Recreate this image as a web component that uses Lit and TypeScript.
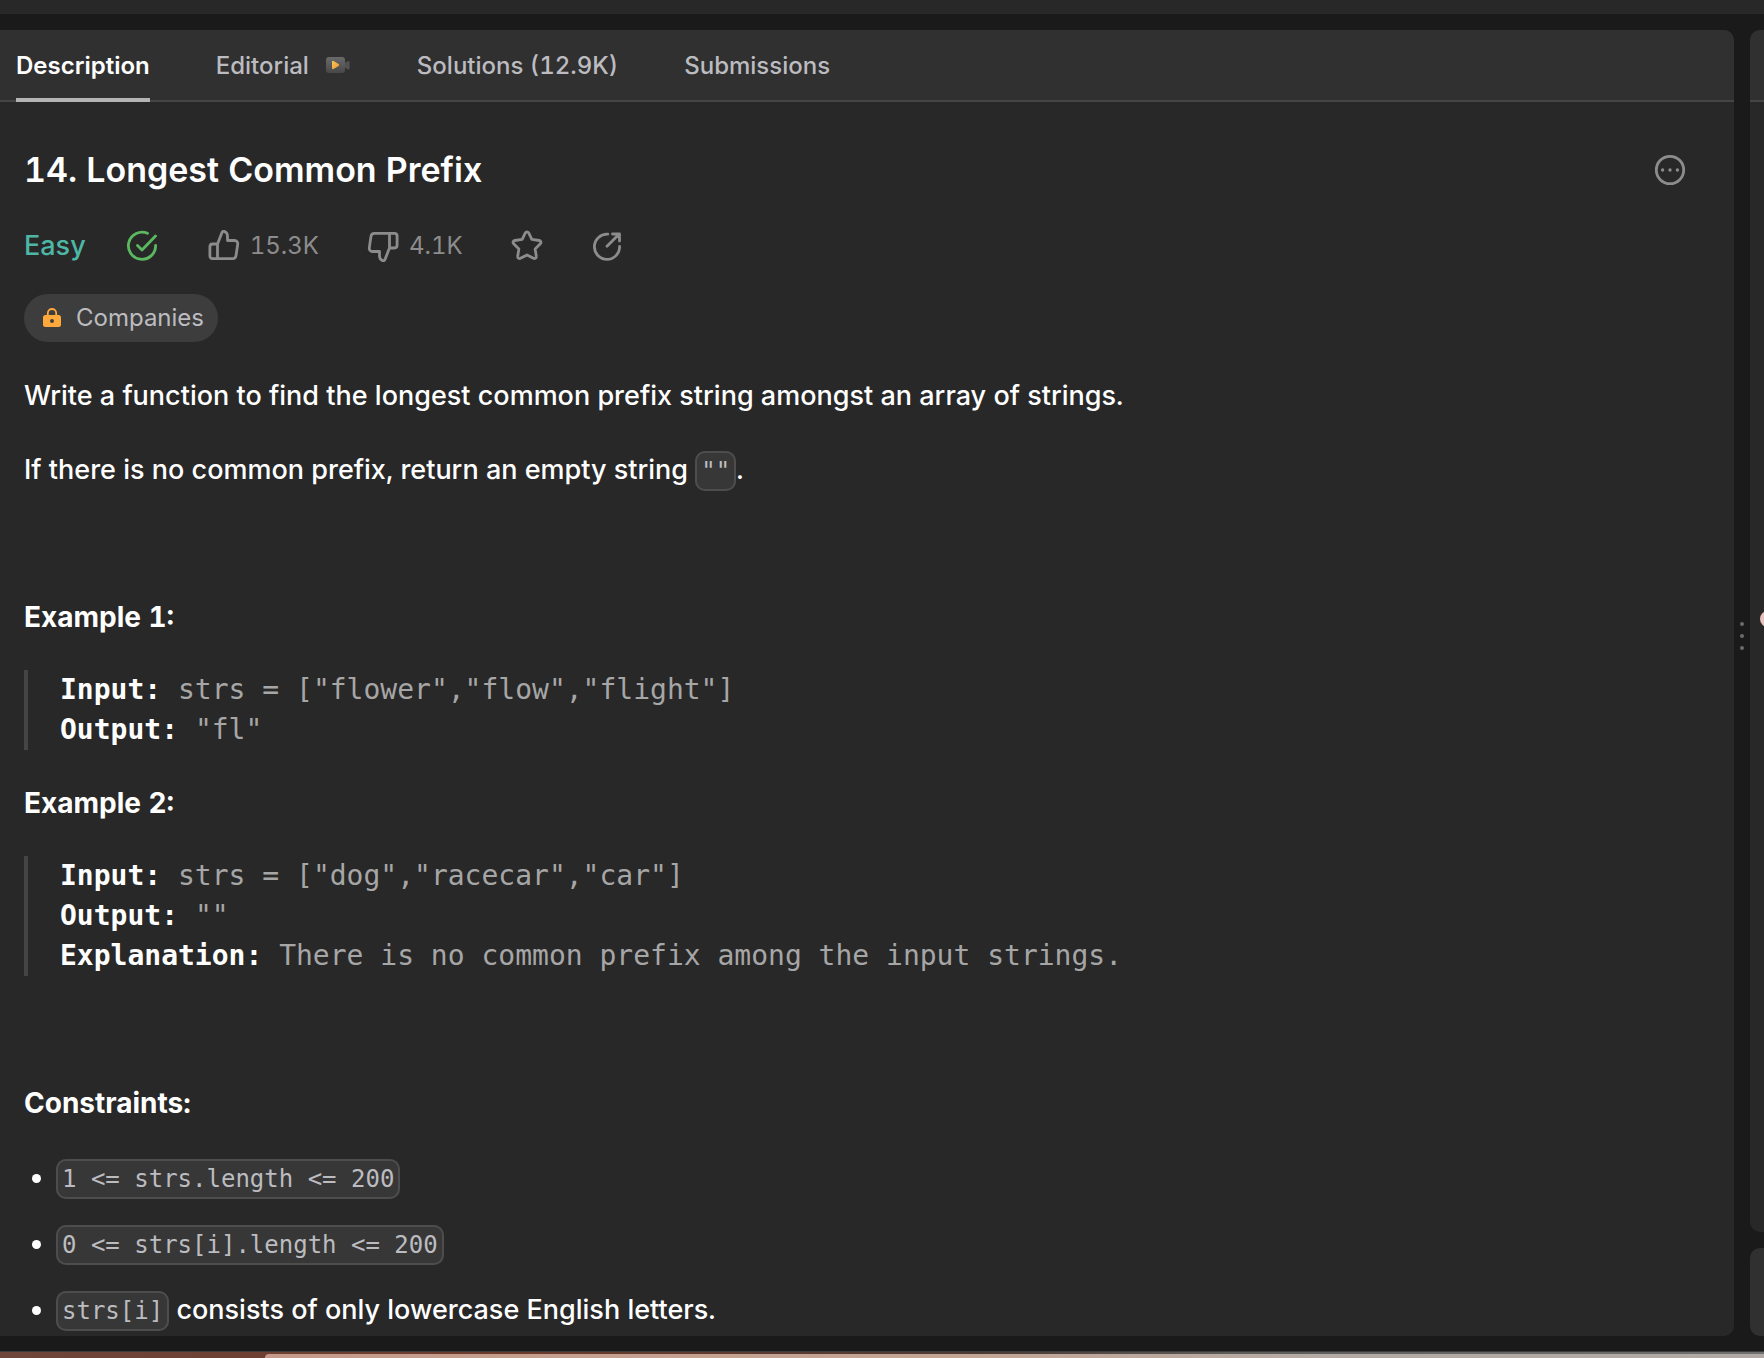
import { LitElement, html, css, svg } from "lit";
import { customElement, state } from "lit/decorators.js";

interface Tab { id: string; label: string; video?: boolean; }

const TABS: Tab[] = [
  { id: "description", label: "Description" },
  { id: "editorial", label: "Editorial", video: true },
  { id: "solutions", label: "Solutions (12.9K)" },
  { id: "submissions", label: "Submissions" },
];

const EXAMPLES: [string, string][][] = [
  [["Input:", 'strs = ["flower","flow","flight"]'], ["Output:", '"fl"']],
  [
    ["Input:", 'strs = ["dog","racecar","car"]'],
    ["Output:", '""'],
    ["Explanation:", "There is no common prefix among the input strings."],
  ],
];

const CONSTRAINTS = [
  { code: "1 <= strs.length <= 200", text: "" },
  { code: "0 <= strs[i].length <= 200", text: "" },
  { code: "strs[i]", text: " consists of only lowercase English letters." },
];

const stroked = (shape: unknown, size = 32) => html`<svg
  class="icon" width=${size} height=${size} viewBox="0 0 32 32" fill="none" stroke="currentColor"
  stroke-width="2.8" stroke-linecap="round" stroke-linejoin="round" aria-hidden="true">${shape}</svg>`;

const solvedIcon = stroked(svg`<path d="M21.500 3.300A13.600 13.600 0 1 0 29.600 15.500M11.500 15.500L16 20L29.500 6"/>`);
const upIcon = stroked(svg`<path d="M9.5 14L14 2.600C14.500 1.300 15.600 1 16.600 1.500C18.500 2.400 19.500 4 19.500 6V10.500H26.500C28.700 10.500 30 12.200 29.700 14.300L28 25.700C27.700 27.500 26.400 28.600 24.700 28.600H4.600C2.900 28.600 1.900 27.600 1.900 26V17C1.900 15.200 2.900 14 4.600 14H9.500V28.600"/>`);
const downIcon = stroked(svg`<path d="M22.500 18L18 29.400C17.500 30.700 16.400 31 15.400 30.500C13.500 29.600 12.500 28 12.500 26V21.500H5.500C3.300 21.500 2 19.800 2.300 17.700L4 6.300C4.300 4.500 5.600 3.400 7.300 3.400H27.400C29.100 3.400 30.100 4.400 30.100 6V15C30.100 16.800 29.100 18 27.400 18H22.500V3.400"/>`);
const starIcon = stroked(svg`<path d="M14.300 2.900C15 1.500 17 1.500 17.700 2.900L20.800 9.400L28.200 10.500C29.900 10.800 30.500 12.600 29.300 13.800L24.100 18.900L25.300 26.300C25.600 27.900 24 29.100 22.500 28.300L16 24.900L9.500 28.300C8 29.100 6.400 27.900 6.700 26.300L7.900 18.900L2.700 13.800C1.500 12.600 2.100 10.800 3.800 10.500L11.200 9.400Z"/>`);
const shareIcon = stroked(svg`<path d="M16.800 4.200A12.600 12.600 0 1 0 28.600 16.500M16 16.200L28 4.200M21.500 4H28.500V11"/>`);
const moreIcon = stroked(svg`<circle cx="16" cy="16" r="13.700"/><path stroke-width="3.400" d="M8.600 16h.01M16 16h.01M23.400 16h.01"/>`);

const videoIcon = html`<svg width="26" height="18" viewBox="0 0 26 18" aria-hidden="true">
  <defs>
    <linearGradient id="body" x1="0" y1="0" x2="0" y2="1"><stop stop-color="#6a6a6a"/><stop offset="1" stop-color="#484848"/></linearGradient>
    <linearGradient id="play" x1="0" y1="0" x2="1" y2="1"><stop stop-color="#ffc45c"/><stop offset="1" stop-color="#ea9a2c"/></linearGradient>
  </defs>
  <path fill="#525252" d="M19 7.500L22.600 5.200Q24.500 4.500 24.500 6V12.400Q24.500 13.800 22.600 13.200L19 11Z"/>
  <rect x="1" y="1" width="19" height="16" rx="3" fill="url(#body)"/>
  <path fill="url(#play)" d="M7 6Q7 4.400 8.500 5L13.600 8Q14.800 9 13.600 10L8.500 13Q7 13.600 7 12Z"/>
</svg>`;

const lockIcon = html`<svg width="20" height="24" viewBox="0 0 20 24" aria-hidden="true">
  <path d="M5.800 10V7.200A4.200 4.200 0 0 1 14.200 7.200V10" fill="none" stroke="#ffa93c" stroke-width="1.800"/>
  <path fill="#ffa93c" fill-rule="evenodd" d="M3.500 9H16.500Q19 9 19 11.500V18.500Q19 21 16.500 21H3.500Q1 21 1 18.500V11.500Q1 9 3.500 9ZM10 13A2 2 0 1 0 10 17A2 2 0 1 0 10 13Z"/>
</svg>`;

@customElement("app-root")
export class AppRoot extends LitElement {
  @state() private active = "description";

  static styles = css`
    :host {
      display: flex;
      flex-direction: column;
      height: 100vh;
      box-sizing: border-box;
      overflow: hidden;
      background: #1a1a1a;
      color: #fff;
      font-family: Inter, "Liberation Sans", sans-serif;
      font-variant-numeric: tabular-nums;
    }
    * { box-sizing: border-box; }
    button { font: inherit; font-variant-numeric: inherit; color: inherit; background: none; border: 0; padding: 0; cursor: pointer; }
    svg { display: block; flex: none; }
    .topbar { flex: none; height: 14px; background: #282828; }
    .workspace { flex: 1; min-height: 0; display: flex; padding: 16px 0 15px; }
    .panel {
      flex: 1;
      min-width: 0;
      display: flex;
      flex-direction: column;
      overflow: hidden;
      background: #282828;
      border-radius: 0 10px 10px 0;
    }
    .tabs {
      flex: none;
      display: flex;
      gap: 66px;
      height: 72px;
      padding: 0 16px;
      background: #303030;
      border-bottom: 2px solid #454545;
    }
    .tab {
      display: flex;
      align-items: center;
      gap: 16px;
      height: 72px;
      padding-top: 2px;
      border-bottom: 4px solid transparent;
      color: #bcbcc0;
      font-size: 24px;
      font-weight: 500;
      white-space: nowrap;
    }
    .tab.active { color: #fff; border-bottom-color: #b3b3b3; font-weight: 600; }
    .content { flex: 1; min-height: 0; overflow: hidden; padding: 44px 24px 0; font-size: 27px; line-height: 40px; }
    .heading { display: flex; align-items: center; justify-content: space-between; padding-right: 24px; height: 48px; }
    h1 { margin: 0; font-size: 34px; line-height: 48px; font-weight: 600; }
    .muted { color: #8c8c8c; }
    .stats { display: flex; align-items: center; gap: 48px; height: 40px; margin-top: 32px; color: #8c8c8c; font-size: 24px; }
    .stats button { display: flex; align-items: center; gap: 10px; }
    .result { display: flex; align-items: center; gap: 40px; padding-right: 2px; }
    .difficulty { color: #4db6a5; font-size: 27px; font-weight: 500; }
    .solved { display: flex; color: #5cb860; }
    .companies {
      display: flex;
      align-items: center;
      gap: 14px;
      height: 48px;
      margin-top: 28px;
      padding: 0 14px 0 18px;
      border-radius: 24px;
      background: #3d3d3d;
      color: #bcbcc0;
      font-size: 24px;
    }
    p { margin: 0; }
    .statement { margin-top: 34px; display: grid; gap: 34px; font-weight: 500; }
    code, pre { font-family: "DejaVu Sans Mono", monospace; font-weight: 400; }
    code {
      padding: 4px;
      border: 2px solid #4d4d4d;
      border-radius: 10px;
      background: #373737;
      color: #bcbcc0;
      font-size: 24px;
    }
    h2 { margin: 0; font-size: 28px; line-height: 40px; font-weight: 700; }
    .examples { margin-top: 106px; display: grid; gap: 33px; }
    .example { display: grid; gap: 33px; }
    pre { margin: 0; padding-left: 32px; border-left: 4px solid #454545; color: #a6a6a6; font-size: 28px; line-height: 40px; }
    pre strong { color: #fff; }
    .limits { margin-top: 107px; }
    ul { margin: 35px 0 0; padding-left: 32px; display: grid; gap: 25px; font-weight: 500; }
    li { line-height: 40px; }
    .divider { flex: none; width: 16px; display: flex; flex-direction: column; align-items: center; justify-content: center; gap: 8px; padding-bottom: 94px; }
    .grip { width: 4px; height: 4px; border-radius: 2px; background: #6b6b6b; }
    .side { flex: none; width: 14px; display: flex; flex-direction: column; gap: 16px; }
    .editor { flex: 1; overflow: hidden; position: relative; background: #282828; border-radius: 10px 0 0 10px; }
    .strip { height: 72px; background: #303030; border-bottom: 2px solid #454545; }
    .marker { position: absolute; left: 10px; top: calc(50% - 20px); width: 16px; height: 16px; border-radius: 8px; background: #e7c0c0; }
    .console { flex: none; height: 88px; background: #303030; border-radius: 10px 0 0 10px; }
    .desktop {
      flex: none;
      height: 7px;
      padding: 2px 0 0 15%;
      border-top: 1px solid #3e3c3a;
      background: linear-gradient(90deg, #70463a, #6a3a2c 30%, #4a3a34 56%, #5c5c5a 70%, #707070);
    }
    .dock { height: 4px; border-radius: 16px 0 0 0; background: linear-gradient(90deg, #c69a8b, #c4a594 45%, #b5aba4 70%, #b0a8a4); }
  `;

  render() {
    return html`
      <div class="topbar"></div>
      <div class="workspace">
        <main class="panel">
          <nav class="tabs" role="tablist">
            ${TABS.map((t) => html`<button role="tab" class="tab ${this.active === t.id ? "active" : ""}"
              aria-selected=${this.active === t.id} @click=${() => (this.active = t.id)}>${t.label}${t.video ? videoIcon : ""}</button>`)}
          </nav>
          <div class="content">
            <div class="heading">
              <h1>14. Longest Common Prefix</h1>
              <button class="muted" aria-label="More">${moreIcon}</button>
            </div>
            <div class="stats">
              <div class="result">
                <span class="difficulty">Easy</span>
                <span class="solved">${solvedIcon}</span>
              </div>
              <button>${upIcon}15.3K</button>
              <button>${downIcon}4.1K</button>
              <button aria-label="Favorite">${starIcon}</button>
              <button aria-label="Share">${shareIcon}</button>
            </div>
            <button class="companies">${lockIcon}Companies</button>
            <div class="statement">
              <p>Write a function to find the longest common prefix string amongst an array of strings.</p>
              <p>If there is no common prefix, return an empty string <code>""</code>.</p>
            </div>
            <div class="examples">
              ${EXAMPLES.map((lines, i) => html`<section class="example"><h2>Example ${i + 1}:</h2><pre>${lines.map(
                ([k, v], n) => html`${n ? "\n" : ""}<strong>${k}</strong> ${v}`)}</pre></section>`)}
            </div>
            <section class="limits">
              <h2>Constraints:</h2>
              <ul>${CONSTRAINTS.map((c) => html`<li><code>${c.code}</code>${c.text}</li>`)}</ul>
            </section>
          </div>
        </main>
        <div class="divider"><i class="grip"></i><i class="grip"></i><i class="grip"></i></div>
        <aside class="side">
          <div class="editor"><div class="strip"></div><i class="marker"></i></div>
          <div class="console"></div>
        </aside>
      </div>
      <div class="desktop"><div class="dock"></div></div>
    `;
  }
}
